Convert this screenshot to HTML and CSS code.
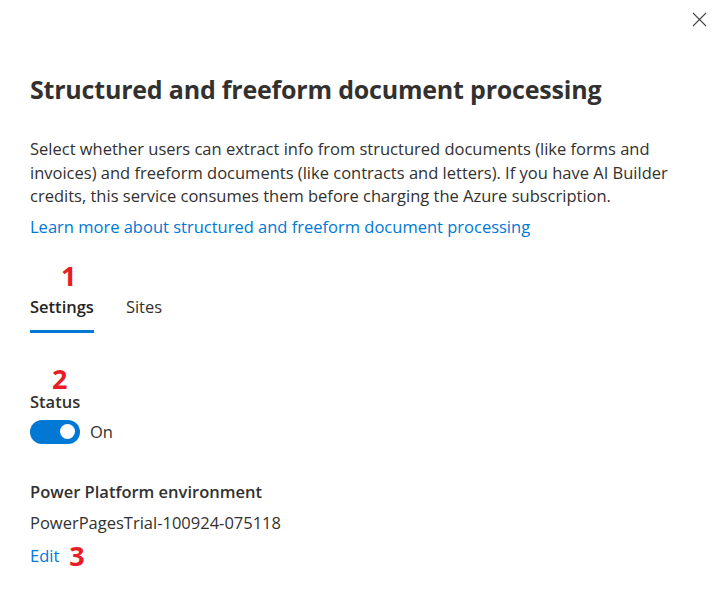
FILE: index.html
```html
<!DOCTYPE html>
<html>
<head>
<meta charset="utf-8">
<link rel="stylesheet" href="styles.css">
</head>
<body>
<div class="panel">
  <button class="close" aria-label="Close">
    <svg width="15" height="15" viewBox="0 0 15 15"><path d="M1 1 L14 14 M14 1 L1 14" stroke="#484644" stroke-width="1.1" fill="none"/></svg>
  </button>
  <h1 class="title">Structured and freeform document processing</h1>
  <p class="desc">Select whether users can extract info from structured documents (like forms and invoices) and freeform documents (like contracts and letters). If you have AI Builder credits, this service consumes them before charging the Azure subscription.</p>
  <a class="link" href="#">Learn more about structured and freeform document processing</a>
  <div class="marker m1">1</div>
  <div class="tabs">
    <div class="tab active">Settings</div>
    <div class="tab">Sites</div>
  </div>
  <div class="marker m2">2</div>
  <div class="label status">Status</div>
  <div class="toggle-row">
    <span class="toggle"><span class="knob"></span></span>
    <span class="toggle-text">On</span>
  </div>
  <div class="label env">Power Platform environment</div>
  <div class="value">PowerPagesTrial-100924-075118</div>
  <div class="edit-row">
    <a class="link" href="#">Edit</a>
    <span class="marker m3">3</span>
  </div>
</div>
</body>
</html>
```

FILE: styles.css
```css
html, body {
  margin: 0;
  padding: 0;
  background: #fff;
}
body {
  font-family: "Open Sans", "Noto Sans", sans-serif;
  color: #323130;
  width: 720px;
  height: 595px;
  overflow: hidden;
}
.panel {
  position: relative;
  padding: 0 30px;
  display: flex;
  flex-direction: column;
  align-items: flex-start;
}
.close {
  position: absolute;
  top: 12px;
  right: 13px;
  border: 0;
  background: none;
  padding: 0;
  width: 15px;
  height: 15px;
  display: flex;
}
.title {
  font-size: 25px;
  font-weight: 700;
  margin: 73px 0 0;
  line-height: 32px;
  letter-spacing: -0.2px;
}
.desc {
  font-size: 16.5px;
  line-height: 23.5px;
  margin: 32px 0 0;
  color: #323130;
  width: 645px;
}
.link {
  color: #0078d4;
  text-decoration: none;
  font-size: 16.5px;
  line-height: 22px;
}
.desc + .link {
  margin-top: 8px;
}
.marker {
  color: #e81c24;
  font-weight: 700;
  font-size: 27px;
  line-height: 24px;
}
.m1 { margin: 26px 0 0 31px; }
.tabs {
  display: flex;
  gap: 32px;
  margin-top: 8px;
}
.tab {
  font-size: 16.5px;
  line-height: 22px;
  padding: 0 0 12px;
  border-bottom: 3px solid transparent;
}
.tab.active {
  font-weight: 600;
  color: #252423;
  border-bottom-color: #0078d4;
}
.m2 { margin: 34px 0 0 22px; }
.label {
  font-size: 16.5px;
  font-weight: 600;
  line-height: 22px;
}
.status { margin-top: 0; }
.toggle-row {
  display: flex;
  align-items: center;
  gap: 10px;
  margin-top: 7px;
}
.toggle {
  width: 50px;
  height: 24px;
  border-radius: 12px;
  background: #0078d4;
  position: relative;
  display: block;
}
.knob {
  position: absolute;
  width: 15px;
  height: 15px;
  border-radius: 50%;
  background: #fff;
  right: 5px;
  top: 4.5px;
}
.toggle-text {
  font-size: 16.5px;
  line-height: 22px;
}
.env { margin-top: 37px; }
.value {
  font-size: 16.5px;
  line-height: 22px;
  margin-top: 9px;
}
.edit-row {
  display: flex;
  align-items: center;
  gap: 10px;
  margin-top: 10px;
}
```
